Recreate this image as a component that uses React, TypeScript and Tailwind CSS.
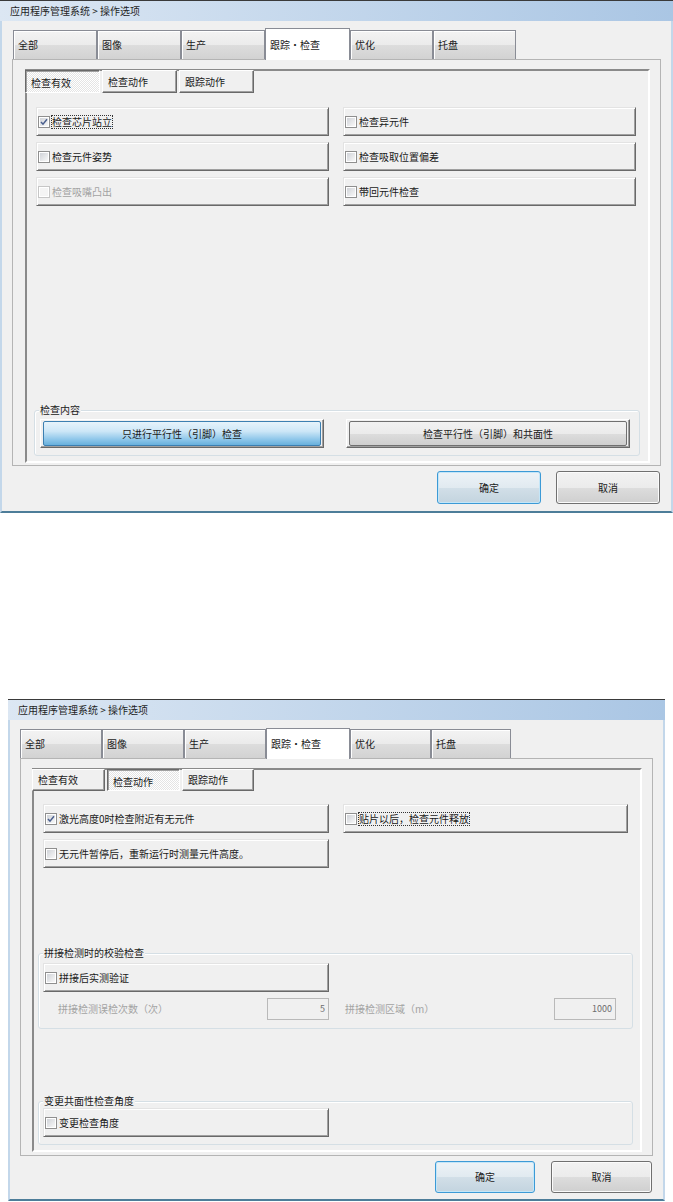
import clsx from "clsx";

const font = "font-['Noto_Sans_CJK_SC','Noto_Sans',sans-serif]";
const tabBg = "bg-[linear-gradient(#f3f3f3,#ebebeb_50%,#dddddd_50%,#d2d2d2)]";
const btnBg = "bg-[linear-gradient(#f2f2f2,#ebebeb_50%,#dddddd_50%,#cfcfcf)]";

function CheckBox({ checked, disabled }: { checked?: boolean; disabled?: boolean }) {
  return (
    <span
      className={clsx(
        "flex size-[12px] shrink-0 items-center justify-center border bg-white",
        disabled ? "border-[#c6c6c6]" : "border-[#8f8f8f]",
      )}
    >
      <span
        className={clsx(
          "flex size-[8px] items-center justify-center",
          disabled ? "bg-[#f4f4f4]" : "bg-linear-to-br from-[#d0d3d8] to-[#f8f8f8]",
        )}
      >
        {checked && (
          <svg width="8" height="8" viewBox="0 0 8 8" aria-hidden="true">
            <path d="M1 3.9 L3 6.2 L7 1.3" fill="none" stroke="#4a5f8e" strokeWidth="1.5" />
          </svg>
        )}
      </span>
    </span>
  );
}

interface CheckRowProps {
  label: string;
  checked?: boolean;
  disabled?: boolean;
  focused?: boolean;
  className?: string;
}

function CheckRow({ label, checked, disabled, focused, className }: CheckRowProps) {
  return (
    <div
      className={clsx(
        "flex items-center gap-[2px] border border-t-[#e3e3e3] border-l-[#e3e3e3] border-r-[#696969] border-b-[#696969] bg-[#f0f0f0] pl-[1px] shadow-[inset_1px_1px_0_#ffffff,inset_-1px_-1px_0_#a0a0a0]",
        className,
      )}
    >
      <CheckBox checked={checked} disabled={disabled} />
      <span
        className={clsx(
          "text-[10px] leading-[12px]",
          disabled ? "text-[#a3a3a3]" : "text-[#1a1a1a]",
          focused && "outline-1 outline-dotted outline-[#333333]",
        )}
      >
        {label}
      </span>
    </div>
  );
}

function TitleBar() {
  return (
    <div className="flex h-[21px] items-center border-t border-[#3a3a3a] bg-linear-to-r from-[#dce7f3] to-[#aac6e4] pl-[10px] text-[10px] leading-[12px] text-[#1f1f1f]">
      应用程序管理系统 &gt; 操作选项
    </div>
  );
}

function Tab({ label, active, className }: { label: string; active?: boolean; className: string }) {
  return (
    <div
      className={clsx(
        "flex items-center border border-b-0 border-[#898c95] pl-[4px] text-[10px] leading-[12px] text-[#1a1a1a]",
        active ? "relative z-10 -mb-px bg-white" : clsx(tabBg, "shadow-[inset_1px_1px_0_#ffffff]"),
        className,
      )}
    >
      {label}
    </div>
  );
}

function SubTab({ label, active, className }: { label: string; active?: boolean; className: string }) {
  return (
    <div
      className={clsx(
        "flex items-center border pl-[5px] text-[10px] leading-[12px] text-[#1a1a1a]",
        active
          ? "border-t-[#696969] border-l-[#696969] border-r-white border-b-white bg-[image:repeating-conic-gradient(#ffffff_0_25%,#e4e4e4_0_50%)] bg-[length:2px_2px] pt-[3px] shadow-[inset_1px_1px_0_#a0a0a0]"
          : "border-t-white border-l-white border-r-[#696969] border-b-[#696969] bg-[#f0f0f0] shadow-[inset_-1px_-1px_0_#a0a0a0]",
        className,
      )}
    >
      {label}
    </div>
  );
}

function GroupBox({ title, className, children }: { title: string; className: string; children: React.ReactNode }) {
  return (
    <div className={clsx("relative flex flex-col rounded-[3px] border border-[#d5dfe5] shadow-[inset_1px_1px_0_#ffffff]", className)}>
      <span className="absolute -top-[7px] left-[4px] bg-[#f0f0f0] px-[1px] text-[10px] leading-[12px] text-[#1a1a1a]">
        {title}
      </span>
      {children}
    </div>
  );
}

function OptionButton({ label, pressed, className }: { label: string; pressed?: boolean; className: string }) {
  return (
    <div
      className={clsx(
        "flex border border-t-white border-l-white border-r-[#696969] border-b-[#696969] px-[2px] py-[1px] shadow-[inset_-1px_-1px_0_#a0a0a0]",
        className,
      )}
    >
      <div
        className={clsx(
          "flex flex-1 items-center justify-center rounded-[2px] border text-[10px] leading-[12px] text-[#1a1a1a]",
          pressed
            ? "border-[#3c7fb1] bg-[linear-gradient(#e6f3fb,#cde7f7_40%,#8fc7ea_75%,#68b0dc)]"
            : clsx("border-[#707070]", btnBg),
        )}
      >
        {label}
      </div>
    </div>
  );
}

function DialogButton({ label, primary, className }: { label: string; primary?: boolean; className: string }) {
  return (
    <div
      className={clsx(
        "flex items-center justify-center rounded-[3px] border text-[10px] leading-[12px] text-[#1a1a1a]",
        primary
          ? "border-[#3c9ad6] bg-[linear-gradient(#edf3f7,#e1eaf0_50%,#d2dfe8_50%,#c3d4df)] shadow-[inset_0_0_0_1px_#c4e6f8]"
          : clsx("border-[#707070] shadow-[inset_0_0_0_1px_#fbfbfb]", btnBg),
        className,
      )}
    >
      {label}
    </div>
  );
}

function DialogOne() {
  return (
    <div className="w-[673px]">
      <TitleBar />
      <div className="flex h-[492px] flex-col border-x-2 border-b-2 border-x-[#c3d7ea] border-b-[#4d7d99] bg-[#f0f0f0]">
        <div className="mt-[7px] flex h-[31px] items-end pl-[11px]">
          <Tab label="全部" className="h-[29px] w-[84px]" />
          <Tab label="图像" className="h-[29px] w-[84px]" />
          <Tab label="生产" className="h-[29px] w-[84px]" />
          <Tab label="跟踪・检查" active className="h-[32px] w-[85px]" />
          <Tab label="优化" className="h-[29px] w-[83px]" />
          <Tab label="托盘" className="h-[29px] w-[83px]" />
        </div>
        <div className="ml-[10px] h-[407px] w-[649px] border border-[#b4b4b4]">
          <div className="ml-[12px] mt-[9px] flex h-[394px] w-[625px] flex-col border-2 border-t-[#8a8a8a] border-l-[#8a8a8a] border-r-white border-b-white">
            <div className="-ml-[2px] -mt-[1px] flex h-[23px] gap-[2px]">
              <SubTab label="检查有效" active className="w-[75px]" />
              <SubTab label="检查动作" className="w-[75px]" />
              <SubTab label="跟踪动作" className="w-[75px]" />
            </div>
            <div className="ml-[9px] mt-[14px] grid grid-cols-[293px_293px] gap-x-[14px] gap-y-[6px]">
              <CheckRow label="检查芯片站立" checked focused className="h-[29px]" />
              <CheckRow label="检查异元件" className="h-[29px]" />
              <CheckRow label="检查元件姿势" className="h-[29px]" />
              <CheckRow label="检查吸取位置偏差" className="h-[29px]" />
              <CheckRow label="检查吸嘴凸出" disabled className="h-[29px]" />
              <CheckRow label="带回元件检查" className="h-[29px]" />
            </div>
            <GroupBox title="检查内容" className="ml-[7px] mt-[204px] h-[46px] w-[606px]">
              <div className="ml-[5px] mt-[8px] flex gap-[22px]">
                <OptionButton label="只进行平行性（引脚）检查" pressed className="h-[29px] w-[284px]" />
                <OptionButton label="检查平行性（引脚）和共面性" className="h-[29px] w-[284px]" />
              </div>
            </GroupBox>
          </div>
        </div>
        <div className="mt-[5px] flex justify-end gap-[15px] pr-[11px]">
          <DialogButton label="确定" primary className="h-[33px] w-[104px]" />
          <DialogButton label="取消" className="h-[33px] w-[104px]" />
        </div>
      </div>
    </div>
  );
}

function DialogTwo() {
  return (
    <div className="ml-[8px] mt-[186px] w-[657px]">
      <TitleBar />
      <div className="flex h-[481px] flex-col border-x-2 border-b-2 border-x-[#c3d7ea] border-b-[#4d7d99] bg-[#f0f0f0]">
        <div className="mt-[8px] flex h-[30px] items-end pl-[10px]">
          <Tab label="全部" className="h-[29px] w-[82px]" />
          <Tab label="图像" className="h-[29px] w-[82px]" />
          <Tab label="生产" className="h-[29px] w-[82px]" />
          <Tab label="跟踪・检查" active className="h-[31px] w-[84px]" />
          <Tab label="优化" className="h-[29px] w-[81px]" />
          <Tab label="托盘" className="h-[29px] w-[80px]" />
        </div>
        <div className="ml-[10px] h-[398px] w-[633px] border border-[#b4b4b4]">
          <div className="ml-[11px] mt-[9px] flex h-[384px] w-[610px] flex-col border-2 border-t-[#8a8a8a] border-l-[#8a8a8a] border-r-white border-b-white">
            <div className="-ml-[2px] -mt-[1px] flex h-[22px] gap-[2px]">
              <SubTab label="检查有效" className="w-[73px]" />
              <SubTab label="检查动作" active className="w-[73px]" />
              <SubTab label="跟踪动作" className="w-[72px]" />
            </div>
            <div className="ml-[9px] mt-[13px] grid grid-cols-[286px_285px] gap-x-[14px] gap-y-[6px]">
              <CheckRow label="激光高度0时检查附近有无元件" checked className="h-[29px]" />
              <CheckRow label="贴片以后，检查元件释放" focused className="h-[29px]" />
              <CheckRow label="无元件暂停后，重新运行时测量元件高度。" className="h-[29px]" />
            </div>
            <GroupBox title="拼接检测时的校验检查" className="ml-[4px] mt-[85px] h-[76px] w-[595px]">
              <CheckRow label="拼接后实测验证" className="ml-[4px] mt-[9px] h-[29px] w-[286px]" />
              <div className="ml-[4px] mt-[6px] flex h-[22px] gap-[14px] text-[10px] leading-[12px]">
                <div className="flex w-[286px] items-center">
                  <span className="flex-1 pl-[15px] text-[#a3a3a3]">拼接检测误检次数（次）</span>
                  <span className="flex h-[22px] w-[62px] items-center justify-end border border-[#b9b9b9] bg-[#f0f0f0] pr-[3px] text-[9px] text-[#6d6d6d]">
                    5
                  </span>
                </div>
                <div className="flex w-[273px] items-center">
                  <span className="flex-1 pl-[2px] text-[#a3a3a3]">拼接检测区域（m）</span>
                  <span className="flex h-[22px] w-[62px] items-center justify-end border border-[#b9b9b9] bg-[#f0f0f0] pr-[3px] text-[9px] text-[#6d6d6d]">
                    1000
                  </span>
                </div>
              </div>
            </GroupBox>
            <GroupBox title="变更共面性检查角度" className="ml-[4px] mt-[72px] h-[44px] w-[595px]">
              <CheckRow label="变更检查角度" className="ml-[4px] mt-[6px] h-[29px] w-[286px]" />
            </GroupBox>
          </div>
        </div>
        <div className="mt-[5px] flex justify-end gap-[16px] pr-[11px]">
          <DialogButton label="确定" primary className="h-[32px] w-[100px]" />
          <DialogButton label="取消" className="h-[32px] w-[101px]" />
        </div>
      </div>
    </div>
  );
}

export default function App() {
  return (
    <div className={clsx("h-[1202px] w-[673px] overflow-hidden bg-white", font)}>
      <DialogOne />
      <DialogTwo />
    </div>
  );
}
